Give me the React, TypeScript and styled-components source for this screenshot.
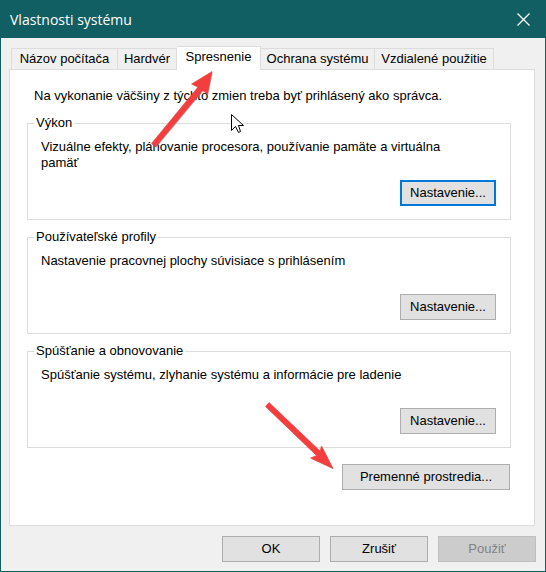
import React from "react";
import styled, { createGlobalStyle, css } from "styled-components";

const GlobalStyle = createGlobalStyle`
  *, *::before, *::after { box-sizing: border-box; }
  body {
    margin: 0;
    background: #f0f0f0;
    color: #000;
    font: 13px/16px "Liberation Sans", Arial, sans-serif;
  }
  button { font: inherit; color: inherit; }
`;

const Dialog = styled.div`
  position: relative;
  display: flex;
  flex-direction: column;
  min-height: 100vh;
  border: 1px solid #115e63;
  border-top: 0;
  background: #f0f0f0;
`;

const TitleBar = styled.header`
  display: flex;
  align-items: center;
  justify-content: space-between;
  height: 38px;
  padding: 0 15px 0 9px;
  background: #115e63;
  color: #fff;
`;

const Title = styled.h1`
  margin: 0;
  padding-top: 2px;
  font: 14px/20px "Open Sans", "Segoe UI", sans-serif;
`;

const CloseButton = styled.button`
  display: flex;
  padding: 0;
  border: 0;
  background: none;
  color: #fff;
`;

const Content = styled.main`
  display: flex;
  flex: 1;
  flex-direction: column;
  padding: 8px 10px 10px 8px;
`;

const TabList = styled.div`
  display: flex;
  align-items: flex-end;
  padding-left: 2px;
`;

const Tab = styled.button<{ $width: number; $active?: boolean }>`
  min-width: ${({ $width }) => $width}px;
  height: 21px;
  padding: 0 4px;
  border: 1px solid #dcdcdc;
  border-bottom: 0;
  border-left-width: 0;
  background: #f0f0f0;
  white-space: nowrap;

  &:first-child { border-left-width: 1px; }

  ${({ $active }) =>
    $active &&
    css`
      z-index: 1;
      height: 24px;
      margin-bottom: -1px;
      padding-bottom: 3px;
      background: #fff;
    `}
`;

const Panel = styled.section`
  display: flex;
  flex: 1;
  flex-direction: column;
  padding: 18px 23px 35px 17px;
  border: 1px solid #dcdcdc;
  background: #fff;
`;

const Notice = styled.p`
  margin: 0 0 11px;
  padding-left: 7px;
`;

const Groups = styled.div`
  display: grid;
  gap: 9px;
`;

const Group = styled.fieldset`
  min-width: 0;
  margin: 0;
  padding: 8px 14px 13px 6px;
  border: 1px solid #dcdcdc;
`;

const Legend = styled.legend`
  padding: 0 2px;
`;

const GroupBody = styled.div`
  display: flex;
  flex-direction: column;
  gap: 9px;
  padding-left: 7px;
`;

const Description = styled.p`
  min-height: 32px;
  margin: 0;
  padding-right: 24px;
`;

const PushButton = styled.button<{ $focused?: boolean }>`
  align-self: flex-end;
  min-width: 96px;
  height: 26px;
  padding: 0 7px;
  border: ${({ $focused }) => ($focused ? "2px solid #0078d7" : "1px solid #adadad")};
  background: #e1e1e1;
  white-space: nowrap;

  &:disabled {
    border-color: #bfbfbf;
    background: #ccc;
    color: #838383;
  }
`;

const PanelActions = styled.div`
  display: flex;
  justify-content: flex-end;
  margin-top: 16px;
  padding-right: 1px;

  ${PushButton} { min-width: 168px; }
`;

const Footer = styled.footer`
  display: flex;
  justify-content: flex-end;
  gap: 10px;
  padding: 0 9px 9px;

  ${PushButton} { min-width: 98px; }
`;

const Annotations = styled.svg`
  position: absolute;
  top: 0;
  left: 0;
  z-index: 2;
  pointer-events: none;
`;

const tabs = [
  { label: "Názov počítača", width: 107 },
  { label: "Hardvér", width: 59 },
  { label: "Spresnenie", width: 84 },
  { label: "Ochrana systému", width: 114 },
  { label: "Vzdialené použitie", width: 119 },
];
const activeTab = "Spresnenie";

const groups = [
  {
    title: "Výkon",
    text: "Vizuálne efekty, plánovanie procesora, používanie pamäte a virtuálna pamäť",
    focused: true,
  },
  { title: "Používateľské profily", text: "Nastavenie pracovnej plochy súvisiace s prihlásením" },
  { title: "Spúšťanie a obnovovanie", text: "Spúšťanie systému, zlyhanie systému a informácie pre ladenie" },
];

const arrows = [
  "M211 71.500L206.500 94L201.500 90.500L154.500 147L150.500 143.500L197 87L190.500 84Z",
  "M332 468.500L309.500 458L315.500 455.500L264.500 406.500L268 402.500L319 451L320.500 446Z",
];

export default function App() {
  return (
    <>
      <GlobalStyle />
      <Dialog role="dialog" aria-labelledby="dialog-title">
        <TitleBar>
          <Title id="dialog-title">Vlastnosti systému</Title>
          <CloseButton type="button" aria-label="Zavrieť">
            <svg width="13" height="13" viewBox="0 0 13 13" fill="none" stroke="currentColor" strokeWidth="1.3">
              <path d="M.5.5l12 12M12.5.5l-12 12" />
            </svg>
          </CloseButton>
        </TitleBar>
        <Content>
          <TabList role="tablist">
            {tabs.map(({ label, width }) => (
              <Tab
                key={label}
                type="button"
                role="tab"
                aria-selected={label === activeTab}
                $width={width}
                $active={label === activeTab}
              >
                {label}
              </Tab>
            ))}
          </TabList>
          <Panel role="tabpanel" aria-label={activeTab}>
            <Notice>Na vykonanie väčšiny z týchto zmien treba byť prihlásený ako správca.</Notice>
            <Groups>
              {groups.map(({ title, text, focused }) => (
                <Group key={title}>
                  <Legend>{title}</Legend>
                  <GroupBody>
                    <Description>{text}</Description>
                    <PushButton type="button" $focused={focused}>Nastavenie...</PushButton>
                  </GroupBody>
                </Group>
              ))}
            </Groups>
            <PanelActions>
              <PushButton type="button">Premenné prostredia...</PushButton>
            </PanelActions>
          </Panel>
        </Content>
        <Footer>
          <PushButton type="button">OK</PushButton>
          <PushButton type="button">Zrušiť</PushButton>
          <PushButton type="button" disabled>Použiť</PushButton>
        </Footer>
        <Annotations width="340" height="480" viewBox="0 0 340 480" aria-hidden="true">
          {arrows.map((d) => (
            <g key={d} strokeLinejoin="round">
              <path d={d} transform="translate(.7 .8)" fill="#777" opacity=".6" />
              <path d={d} fill="#f43e3e" stroke="#f43e3e" strokeWidth=".6" />
            </g>
          ))}
          <path d="M230.500 114.500v16l4-4 3 6 2-1-2-6h5z" fill="#fff" stroke="#000" />
        </Annotations>
      </Dialog>
    </>
  );
}
